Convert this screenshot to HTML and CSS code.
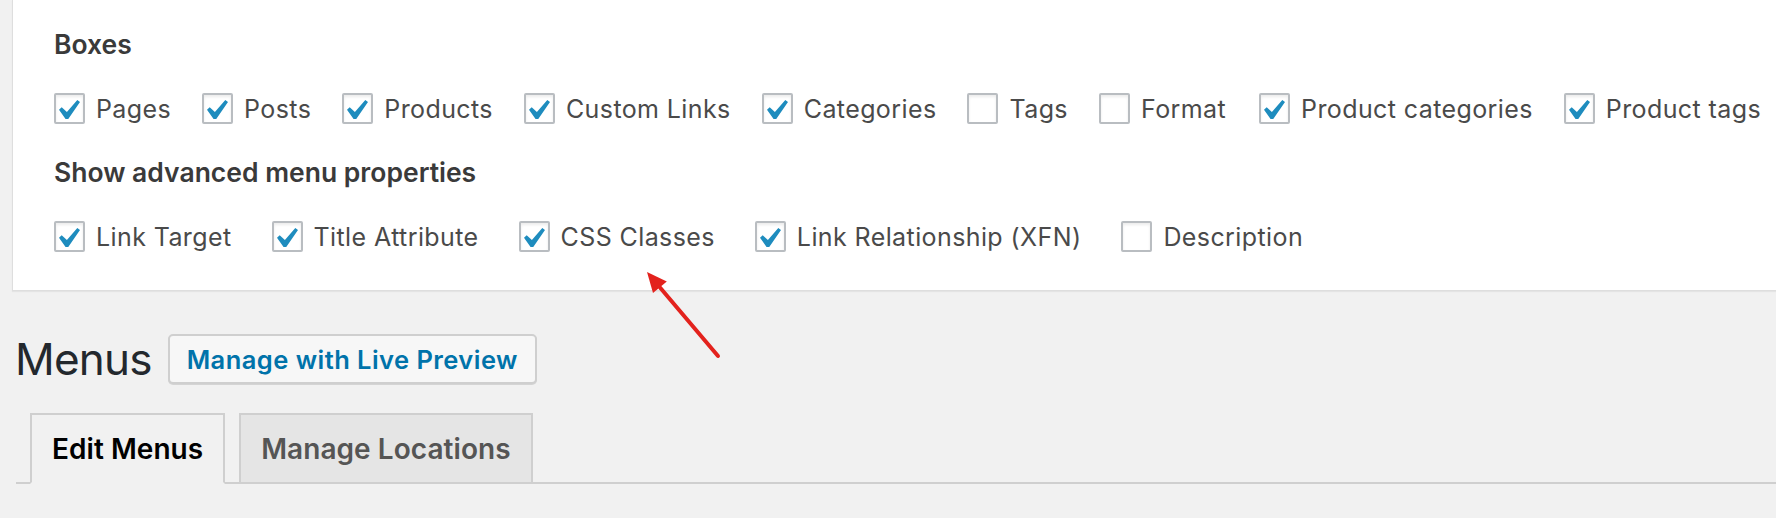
FILE: index.html
```html
<!DOCTYPE html>
<html lang="en">
<head>
<meta charset="utf-8">
<title>Menus</title>
<link rel="stylesheet" href="styles.css">
</head>
<body>
<div class="screen-options">
  <fieldset class="prefs">
    <legend class="legend">Boxes</legend>
    <div class="row row-boxes">
      <label class="opt"><span class="cb"><svg class="check" viewBox="5.78 4.89 10.39 9.32"><path d="M14.83 4.89l1.34.94-5.81 8.38H9.02L5.78 9.67l1.34-1.25 2.57 2.4z"/></svg></span>Pages</label>
      <label class="opt"><span class="cb"><svg class="check" viewBox="5.78 4.89 10.39 9.32"><path d="M14.83 4.89l1.34.94-5.81 8.38H9.02L5.78 9.67l1.34-1.25 2.57 2.4z"/></svg></span>Posts</label>
      <label class="opt"><span class="cb"><svg class="check" viewBox="5.78 4.89 10.39 9.32"><path d="M14.83 4.89l1.34.94-5.81 8.38H9.02L5.78 9.67l1.34-1.25 2.57 2.4z"/></svg></span>Products</label>
      <label class="opt"><span class="cb"><svg class="check" viewBox="5.78 4.89 10.39 9.32"><path d="M14.83 4.89l1.34.94-5.81 8.38H9.02L5.78 9.67l1.34-1.25 2.57 2.4z"/></svg></span>Custom Links</label>
      <label class="opt"><span class="cb"><svg class="check" viewBox="5.78 4.89 10.39 9.32"><path d="M14.83 4.89l1.34.94-5.81 8.38H9.02L5.78 9.67l1.34-1.25 2.57 2.4z"/></svg></span>Categories</label>
      <label class="opt"><span class="cb"></span>Tags</label>
      <label class="opt opt-wide"><span class="cb"></span>Format</label>
      <label class="opt"><span class="cb"><svg class="check" viewBox="5.78 4.89 10.39 9.32"><path d="M14.83 4.89l1.34.94-5.81 8.38H9.02L5.78 9.67l1.34-1.25 2.57 2.4z"/></svg></span>Product categories</label>
      <label class="opt"><span class="cb"><svg class="check" viewBox="5.78 4.89 10.39 9.32"><path d="M14.83 4.89l1.34.94-5.81 8.38H9.02L5.78 9.67l1.34-1.25 2.57 2.4z"/></svg></span>Product tags</label>
    </div>
  </fieldset>
  <fieldset class="prefs">
    <legend class="legend">Show advanced menu properties</legend>
    <div class="row row-adv">
      <label class="opt"><span class="cb"><svg class="check" viewBox="5.78 4.89 10.39 9.32"><path d="M14.83 4.89l1.34.94-5.81 8.38H9.02L5.78 9.67l1.34-1.25 2.57 2.4z"/></svg></span>Link Target</label>
      <label class="opt"><span class="cb"><svg class="check" viewBox="5.78 4.89 10.39 9.32"><path d="M14.83 4.89l1.34.94-5.81 8.38H9.02L5.78 9.67l1.34-1.25 2.57 2.4z"/></svg></span>Title Attribute</label>
      <label class="opt"><span class="cb"><svg class="check" viewBox="5.78 4.89 10.39 9.32"><path d="M14.83 4.89l1.34.94-5.81 8.38H9.02L5.78 9.67l1.34-1.25 2.57 2.4z"/></svg></span>CSS Classes</label>
      <label class="opt"><span class="cb"><svg class="check" viewBox="5.78 4.89 10.39 9.32"><path d="M14.83 4.89l1.34.94-5.81 8.38H9.02L5.78 9.67l1.34-1.25 2.57 2.4z"/></svg></span>Link Relationship (XFN)</label>
      <label class="opt"><span class="cb"></span>Description</label>
    </div>
  </fieldset>
</div>

<div class="wrap">
  <div class="title-row">
    <h1 class="title">Menus</h1>
    <a class="title-action">Manage with Live Preview</a>
  </div>
  <nav class="tabs">
    <a class="tab tab-active">Edit Menus</a>
    <a class="tab">Manage Locations</a>
  </nav>
</div>

<svg class="annot-arrow" width="110" height="110" viewBox="0 0 110 110">
  <line x1="98" y1="96" x2="40" y2="27.5" stroke="#e3221d" stroke-width="4" stroke-linecap="round"/>
  <polygon points="27,12 46.8,21.5 33,33.1" fill="#e3221d"/>
</svg>
</body>
</html>
```

FILE: styles.css
```css
* { box-sizing: border-box; }

html, body {
  margin: 0;
  padding: 0;
}

body {
  position: relative;
  width: 1776px;
  height: 518px;
  overflow: hidden;
  background: #f1f1f1;
  font-family: Inter, "Noto Sans", sans-serif;
  color: #444;
}

.screen-options {
  margin-left: 12px;
  background: #fff;
  border-left: 1px solid #dedede;
  border-bottom: 1px solid #dedede;
  box-shadow: 0 1px 1px rgba(0, 0, 0, 0.05);
  padding: 29px 0 38px 41px;
  white-space: nowrap;
  overflow: hidden;
}

.prefs {
  border: 0;
  margin: 0;
  padding: 0;
  min-width: 0;
}

.prefs + .prefs {
  margin-top: 33px;
}

.legend {
  display: block;
  padding: 0;
  margin: 0 0 34px;
  font-size: 26.5px;
  line-height: 30px;
  font-weight: 600;
  color: #3a3a3a;
}

.row {
  display: flex;
  align-items: center;
  height: 31px;
}

.opt {
  display: flex;
  align-items: center;
  gap: 11px;
  font-size: 25px;
  line-height: 30px;
  letter-spacing: 0.4px;
  color: #4a4a4a;
}

.row-boxes .opt { margin-right: 31px; }
.row-boxes .opt-wide { margin-right: 33px; }
.row-adv .opt { margin-right: 40px; }

.cb {
  display: flex;
  align-items: center;
  justify-content: center;
  width: 31px;
  height: 31px;
  flex: none;
  border: 2px solid #b9bdc1;
  border-radius: 2px;
  background: #fff;
  box-shadow: inset 0 2px 3px rgba(0, 0, 0, 0.08);
}

.check {
  width: 21px;
  height: 19px;
  fill: #1e8cbe;
  margin-top: 1px;
}

.wrap {
  padding-left: 15px;
}

.title-row {
  display: flex;
  align-items: center;
  gap: 16px;
  margin-top: 43px;
  height: 50px;
}

.title {
  margin: 0;
  font-size: 44px;
  line-height: 50px;
  font-weight: 400;
  letter-spacing: -0.8px;
  color: #23282d;
}

.title-action {
  display: flex;
  align-items: center;
  height: 50px;
  padding: 0 17px;
  border: 2px solid #cfcfcf;
  border-radius: 5px;
  background: #f7f7f7;
  box-shadow: 0 1px 0 #d4d4d4;
  color: #0073aa;
  font-size: 25.5px;
  font-weight: 600;
  letter-spacing: 0.45px;
}

.tabs {
  display: flex;
  align-items: flex-end;
  margin-top: 29px;
  margin-left: 1px;
  border-bottom: 2px solid #cfcfcf;
}

.tab {
  display: flex;
  align-items: center;
  height: 71px;
  margin: 0 0 -2px 14px;
  padding: 0 20px;
  border: 2px solid #cfcfcf;
  background: #e5e5e5;
  color: #555;
  font-size: 28px;
  font-weight: 600;
  letter-spacing: 0.05px;
}

.tab-active {
  background: #f1f1f1;
  border-bottom-color: #f1f1f1;
  color: #000;
}

.annot-arrow {
  position: absolute;
  left: 620px;
  top: 260px;
}
```
